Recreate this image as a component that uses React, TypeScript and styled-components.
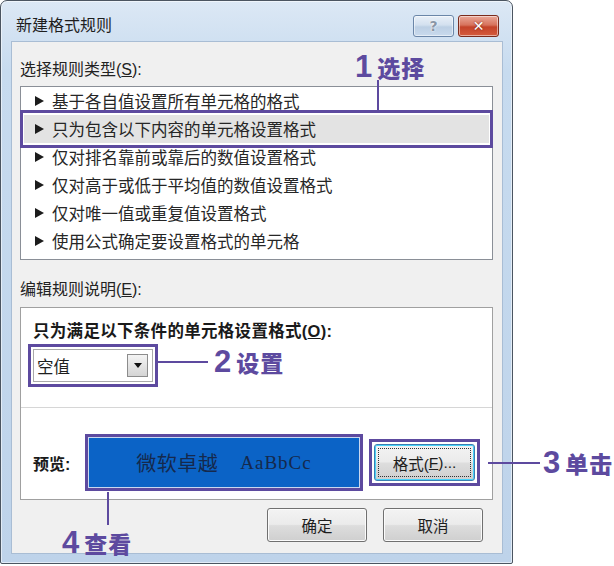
import React from 'react';
import styled, { createGlobalStyle } from 'styled-components';

const PURPLE = '#5d4a9f';
const UI_FONT = '"Liberation Sans", "Noto Sans CJK SC", sans-serif';

const GlobalStyle = createGlobalStyle`
  html, body {
    margin: 0;
    padding: 0;
    background: #ffffff;
  }
  body {
    font-family: ${UI_FONT};
    color: #222;
  }
`;

const Page = styled.div`
  position: relative;
  width: 614px;
  height: 566px;
  overflow: hidden;
`;

const Window = styled.div`
  box-sizing: border-box;
  width: 513px;
  height: 564px;
  border: 1px solid #4b5561;
  border-radius: 7px 7px 2px 2px;
  background: linear-gradient(#dce8f5, #c7dbef 70px, #bed3ea);
  box-shadow: inset 0 0 0 1px rgba(255, 255, 255, 0.55);
  display: flex;
  flex-direction: column;
`;

const TitleBar = styled.div`
  box-sizing: border-box;
  height: 41px;
  padding: 14px 13px 0 15px;
  display: flex;
  align-items: flex-start;
  justify-content: space-between;
`;

const Title = styled.span`
  font-size: 16px;
  line-height: 22px;
  color: #1e1e1e;
`;

const Controls = styled.div`
  display: flex;
  gap: 4px;
`;

const CaptionButton = styled.div<{ $close?: boolean }>`
  box-sizing: border-box;
  width: 41px;
  height: 22px;
  border: 1px solid ${(p) => (p.$close ? '#7a2b1d' : '#6b86a8')};
  border-radius: 3px;
  background: ${(p) =>
    p.$close
      ? 'linear-gradient(#eaa899, #d7735d 45%, #c4432a 55%, #d45b3d)'
      : 'linear-gradient(#e9f0f8, #d3e0ef 45%, #bccfe4 55%, #c9daed)'};
  box-shadow: inset 0 0 0 1px rgba(255, 255, 255, 0.5);
  display: flex;
  align-items: center;
  justify-content: center;
  color: ${(p) => (p.$close ? '#ffffff' : '#8a96a6')};
  font-family: "DejaVu Sans", sans-serif;
  font-weight: bold;
  font-size: 14px;
  text-shadow: ${(p) =>
    p.$close ? '0 0 2px #6a1a0a' : '0 0 1px #ffffff, 0 0 2px #ffffff'};
`;

const Client = styled.div`
  box-sizing: border-box;
  margin: 0 10px 0 11px;
  height: 511px;
  background: #f0f0f0;
  box-shadow: 0 0 0 1px #a9bdd4;
  padding: 18px 9px 0 8px;
  display: flex;
  flex-direction: column;
`;

const SectionLabel = styled.div<{ $gap?: number }>`
  font-size: 16px;
  line-height: 20px;
  height: 20px;
  margin-top: ${(p) => p.$gap ?? 0}px;
  color: #222;
`;

const RuleList = styled.div`
  box-sizing: border-box;
  margin-top: 6px;
  height: 174px;
  border: 1px solid #8a8f97;
  background: #ffffff;
`;

const RuleRow = styled.div<{ $selected?: boolean }>`
  position: relative;
  box-sizing: border-box;
  height: 28px;
  padding-left: 14px;
  display: flex;
  align-items: center;
  gap: 8px;
  font-size: 16.5px;
  color: #262626;
  background: ${(p) => (p.$selected ? '#e3e3e3' : 'transparent')};

  ${(p) =>
    p.$selected &&
    `
    &::after {
      content: '';
      position: absolute;
      top: -5px;
      bottom: -5px;
      left: -1px;
      right: -1px;
      border: 3px solid ${PURPLE};
      box-shadow: inset 0 0 0 1px #ffffff;
      z-index: 1;
    }
  `}
`;

const Arrow = styled.span`
  width: 0;
  height: 0;
  border-left: 9px solid #1c1c1c;
  border-top: 5px solid transparent;
  border-bottom: 5px solid transparent;
`;

const EditPanel = styled.div`
  box-sizing: border-box;
  margin-top: 7px;
  height: 193px;
  border: 1px solid #a0a0a0;
  background: #ffffff;
  display: flex;
  flex-direction: column;
`;

const PanelTop = styled.div`
  box-sizing: border-box;
  height: 100px;
  padding-top: 13px;
  border-bottom: 1px solid #d6d6d6;
`;

const BoldLabel = styled.div`
  margin-left: 12px;
  font-size: 16.5px;
  line-height: 20px;
  font-weight: bold;
  letter-spacing: 0.3px;
  color: #1a1a1a;
`;

const Highlight = styled.div<{ $ml: number; $mt?: number }>`
  box-sizing: border-box;
  display: inline-flex;
  align-items: center;
  justify-content: center;
  margin-left: ${(p) => p.$ml}px;
  margin-top: ${(p) => p.$mt ?? 0}px;
  border: 3px solid ${PURPLE};
  padding: 2px;
`;

const Combo = styled.div`
  box-sizing: border-box;
  width: 120px;
  height: 33px;
  border: 1px solid #a9a9a9;
  background: #ffffff;
  display: flex;
  align-items: center;
  justify-content: space-between;
  padding: 0 4px 0 3px;
  font-size: 16.5px;
  color: #1e1e1e;
`;

const DropButton = styled.div`
  box-sizing: border-box;
  width: 21px;
  height: 23px;
  border: 1px solid #8c8c8c;
  background: linear-gradient(#f4f4f4, #d4d4d4);
  display: flex;
  align-items: center;
  justify-content: center;

  &::before {
    content: '';
    border-top: 5px solid #111;
    border-left: 4px solid transparent;
    border-right: 4px solid transparent;
  }
`;

const PanelBottom = styled.div`
  box-sizing: border-box;
  flex: 1;
  padding-top: 18px;
  display: flex;
  align-items: center;
`;

const PreviewLabel = styled.div`
  width: 52px;
  margin-left: 12px;
  font-size: 16px;
  font-weight: bold;
  color: #1a1a1a;
`;

const PreviewBox = styled.div`
  box-sizing: border-box;
  width: 278px;
  height: 57px;
  border: 3px solid ${PURPLE};
  background: #0b63c6;
  box-shadow: inset 0 0 0 1px #c9d8f0;
  display: flex;
  align-items: center;
  justify-content: center;
  gap: 22px;
  color: #15294d;
`;

const PreviewCjk = styled.span`
  font-family: "Noto Sans CJK SC", sans-serif;
  font-size: 20px;
  letter-spacing: 0.5px;
`;

const PreviewLatin = styled.span`
  font-family: "Liberation Serif", serif;
  font-size: 19px;
  letter-spacing: 1px;
`;

const PushButton = styled.div<{ $focused?: boolean; $w: number; $h: number }>`
  box-sizing: border-box;
  width: ${(p) => p.$w}px;
  height: ${(p) => p.$h}px;
  border: 1px solid ${(p) => (p.$focused ? '#3c7fb1' : '#707070')};
  border-radius: 3px;
  background: linear-gradient(#f3f3f3, #ebebeb 48%, #dddddd 52%, #cfcfcf);
  box-shadow: inset 0 0 0 1px ${(p) => (p.$focused ? '#48d2f9' : '#fbfbfb')};
  display: flex;
  align-items: center;
  justify-content: center;
  font-size: 15.5px;
  color: #1e1e1e;
  position: relative;

  ${(p) =>
    p.$focused &&
    `
    &::before {
      content: '';
      position: absolute;
      inset: 3px;
      border: 1px dotted #333;
    }
  `}
`;

const ButtonRow = styled.div`
  margin-top: 8px;
  padding-right: 10px;
  display: flex;
  justify-content: flex-end;
  gap: 16px;
`;

const CalloutLabel = styled.div<{ $x: number; $y: number }>`
  position: absolute;
  left: ${(p) => p.$x}px;
  top: ${(p) => p.$y}px;
  height: 30px;
  display: flex;
  align-items: center;
  gap: 5px;
  color: ${PURPLE};
  white-space: nowrap;
`;

const CalloutDigit = styled.span`
  font-family: "Liberation Sans", sans-serif;
  font-weight: bold;
  font-size: 31px;
  line-height: 30px;
`;

const CalloutText = styled.span`
  font-family: "Noto Sans CJK SC", sans-serif;
  font-weight: 900;
  font-size: 23px;
  line-height: 30px;
  letter-spacing: 1px;
`;

const Leader = styled.div<{ $x: number; $y: number; $w: number; $h: number }>`
  position: absolute;
  left: ${(p) => p.$x}px;
  top: ${(p) => p.$y}px;
  width: ${(p) => p.$w}px;
  height: ${(p) => p.$h}px;
  background: ${PURPLE};
  z-index: 2;
`;

const rules = [
  '基于各自值设置所有单元格的格式',
  '只为包含以下内容的单元格设置格式',
  '仅对排名靠前或靠后的数值设置格式',
  '仅对高于或低于平均值的数值设置格式',
  '仅对唯一值或重复值设置格式',
  '使用公式确定要设置格式的单元格',
];

const callouts = [
  { n: '1', text: '选择', x: 355, y: 52 },
  { n: '2', text: '设置', x: 214, y: 347 },
  { n: '3', text: '单击', x: 543, y: 448 },
  { n: '4', text: '查看', x: 62, y: 528 },
];

const leaders = [
  { x: 377, y: 80, w: 2, h: 31 },
  { x: 158, y: 361, w: 50, h: 2 },
  { x: 488, y: 462, w: 52, h: 2 },
  { x: 107, y: 492, w: 2, h: 33 },
];

function App(): React.ReactElement {
  return (
    <Page>
      <GlobalStyle />
      <Window>
        <TitleBar>
          <Title>新建格式规则</Title>
          <Controls>
            <CaptionButton>?</CaptionButton>
            <CaptionButton $close>✕</CaptionButton>
          </Controls>
        </TitleBar>
        <Client>
          <SectionLabel>
            选择规则类型(<u>S</u>):
          </SectionLabel>
          <RuleList>
            {rules.map((rule, i) => (
              <RuleRow key={rule} $selected={i === 1}>
                <Arrow />
                <span>{rule}</span>
              </RuleRow>
            ))}
          </RuleList>
          <SectionLabel $gap={20}>
            编辑规则说明(<u>E</u>):
          </SectionLabel>
          <EditPanel>
            <PanelTop>
              <BoldLabel>
                只为满足以下条件的单元格设置格式(<u>O</u>):
              </BoldLabel>
              <Highlight $ml={7} $mt={3}>
                <Combo>
                  <span>空值</span>
                  <DropButton />
                </Combo>
              </Highlight>
            </PanelTop>
            <PanelBottom>
              <PreviewLabel>预览:</PreviewLabel>
              <PreviewBox>
                <PreviewCjk>微软卓越</PreviewCjk>
                <PreviewLatin>AaBbCc</PreviewLatin>
              </PreviewBox>
              <Highlight $ml={6}>
                <PushButton $focused $w={101} $h={37}>
                  格式(<u>F</u>)...
                </PushButton>
              </Highlight>
            </PanelBottom>
          </EditPanel>
          <ButtonRow>
            <PushButton $w={100} $h={34}>确定</PushButton>
            <PushButton $w={100} $h={34}>取消</PushButton>
          </ButtonRow>
        </Client>
      </Window>
      {leaders.map((l) => (
        <Leader key={`${l.x}-${l.y}`} $x={l.x} $y={l.y} $w={l.w} $h={l.h} />
      ))}
      {callouts.map((c) => (
        <CalloutLabel key={c.n} $x={c.x} $y={c.y}>
          <CalloutDigit>{c.n}</CalloutDigit>
          <CalloutText>{c.text}</CalloutText>
        </CalloutLabel>
      ))}
    </Page>
  );
}

export default App;
